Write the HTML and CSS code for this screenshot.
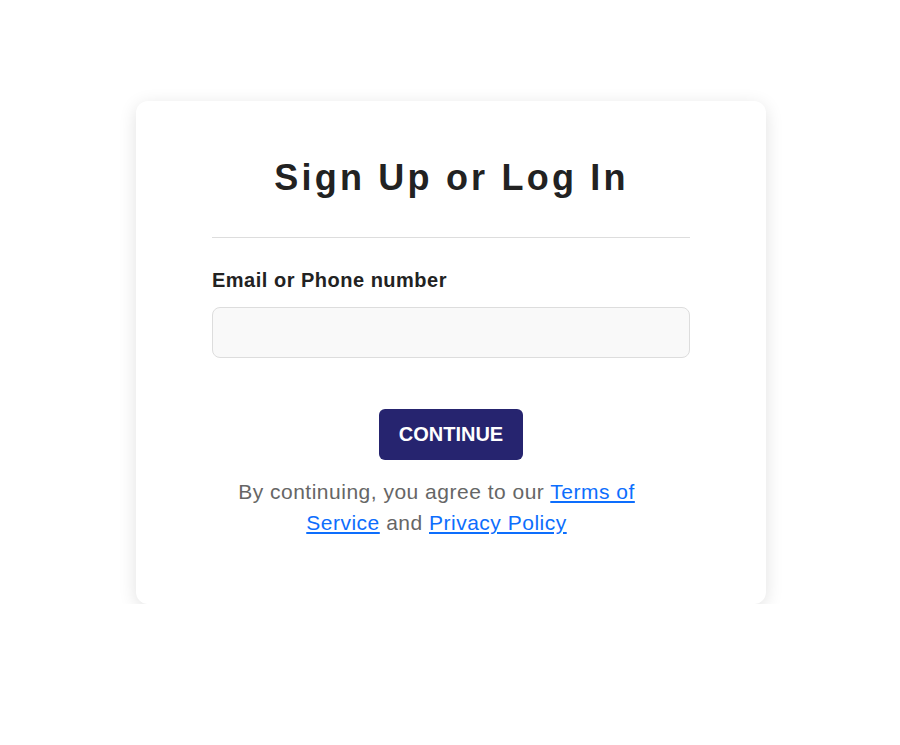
FILE: index.html
```html
<!DOCTYPE html>
<html lang="en">
<head>
<meta charset="utf-8">
<title>Sign Up or Log In</title>
<link rel="stylesheet" href="styles.css">
</head>
<body>
<main class="page">
  <section class="card">
    <h1 class="title">Sign Up or Log In</h1>
    <hr class="divider">
    <form class="form">
      <label class="label" for="ident">Email or Phone number</label>
      <input class="input" id="ident" type="text">
      <div class="actions">
        <button class="btn" type="button">CONTINUE</button>
      </div>
      <p class="terms">By continuing, you agree to our <a href="#">Terms of Service</a> and <a href="#">Privacy Policy</a></p>
    </form>
  </section>
</main>
</body>
</html>
```

FILE: styles.css
```css
* { box-sizing: border-box; }
html, body { margin: 0; padding: 0; background: #fff; }
body { font-family: "Liberation Sans", Arial, sans-serif; color: #222; }
.page {
  display: flex;
  justify-content: center;
  padding: 101px 0 0 2px;
}
.card {
  width: 630px;
  height: 503px;
  background: #fff;
  border-radius: 12px;
  box-shadow: 0 4px 18px rgba(0,0,0,0.12);
  padding: 56px 76px 0;
}
.title {
  margin: 0;
  text-align: center;
  font-size: 36px;
  font-weight: 700;
  letter-spacing: 3.2px;
  text-indent: 1px;
  line-height: 42px;
  color: #222;
}
.divider {
  border: 0;
  border-top: 1px solid #ddd;
  margin: 38px 0 0;
}
.form { display: flex; flex-direction: column; }
.label {
  margin-top: 30px;
  font-size: 20px;
  font-weight: 700;
  letter-spacing: 0.5px;
  line-height: 24px;
  color: #222;
}
.input {
  margin-top: 15px;
  height: 51px;
  border: 1px solid #ddd;
  border-radius: 8px;
  background: #f9f9f9;
  font-size: 18px;
  padding: 0 14px;
}
.actions {
  display: flex;
  justify-content: center;
  margin-top: 51px;
}
.btn {
  width: 144px;
  height: 51px;
  border: 0;
  border-radius: 6px;
  background: #26246f;
  color: #fff;
  font-family: "Liberation Sans", Arial, sans-serif;
  font-size: 20px;
  font-weight: 700;
  cursor: pointer;
}
.terms {
  margin: 16px 0 0;
  width: 449px;
  text-align: center;
  font-size: 21px;
  letter-spacing: 0.5px;
  line-height: 31px;
  color: #666;
}
.terms a { color: #0d6efd; text-decoration: underline; }
```
